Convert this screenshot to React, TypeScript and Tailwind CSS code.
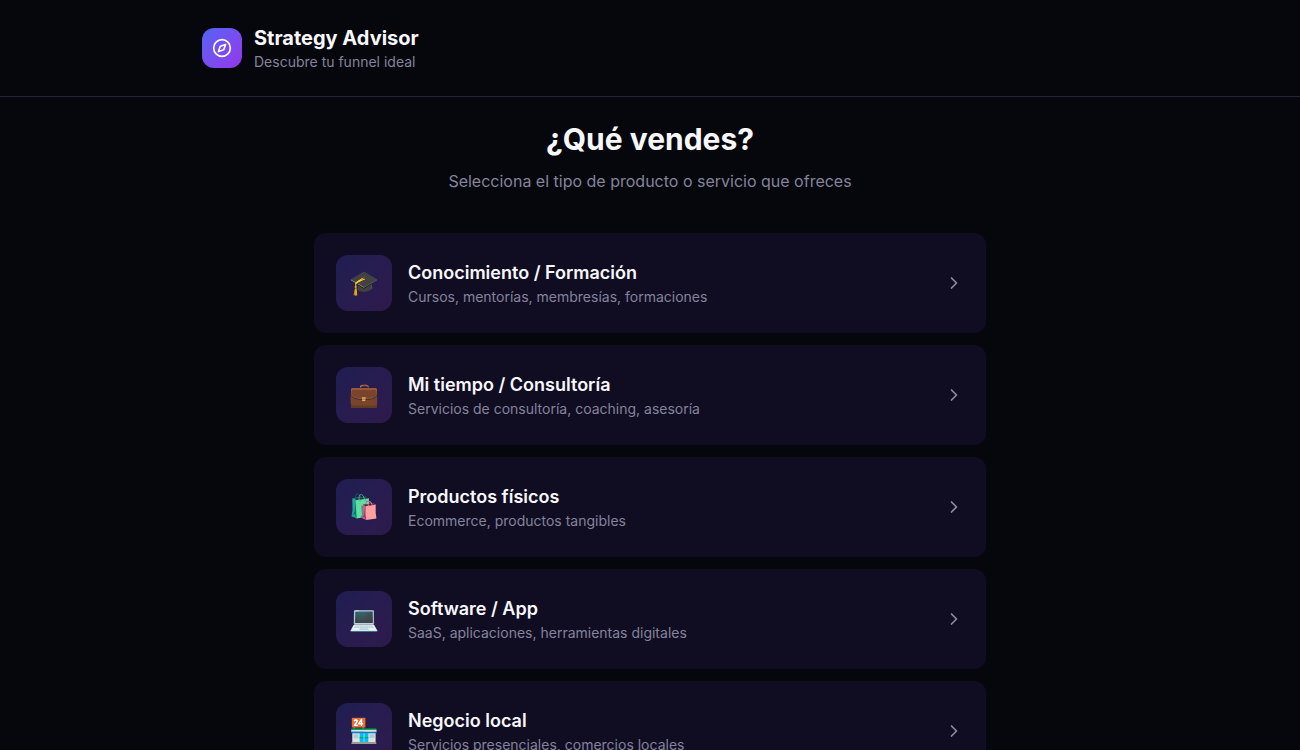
import { ChevronRight, Compass } from "lucide-react";

type Option = { emoji: string; title: string; description: string };

const options: Option[] = [
  { emoji: "🎓", title: "Conocimiento / Formación", description: "Cursos, mentorías, membresías, formaciones" },
  { emoji: "💼", title: "Mi tiempo / Consultoría", description: "Servicios de consultoría, coaching, asesoría" },
  { emoji: "🛍️", title: "Productos físicos", description: "Ecommerce, productos tangibles" },
  { emoji: "💻", title: "Software / App", description: "SaaS, aplicaciones, herramientas digitales" },
  { emoji: "🏪", title: "Negocio local", description: "Servicios presenciales, comercios locales" },
];

function OptionCard({ emoji, title, description }: Option) {
  return (
    <button
      type="button"
      className="flex w-full cursor-pointer items-center gap-4 rounded-xl border-2 border-transparent bg-[#100d22] p-5 text-left hover:border-[#6d4bf0]"
    >
      <span className="flex size-14 shrink-0 items-center justify-center rounded-xl bg-linear-to-br from-[#1f1e52] to-[#2f1a4d] text-2xl">
        {emoji}
      </span>
      <span className="flex min-w-0 flex-1 flex-col">
        <span className="text-lg font-semibold text-[#f8f8fc]">{title}</span>
        <span className="text-sm text-[#84839c]">{description}</span>
      </span>
      <ChevronRight className="size-5 shrink-0 text-[#8f8da6]" aria-hidden="true" />
    </button>
  );
}

export default function App() {
  return (
    <div className="min-h-screen bg-[#06070c] font-['Inter',sans-serif] text-[#f8f8fc] antialiased">
      <header className="border-b border-[#262340] p-6">
        <div className="mx-auto flex max-w-4xl items-center gap-3">
          <div className="flex size-10 items-center justify-center rounded-xl bg-linear-to-br from-[#4f62f5] to-[#9333ea]">
            <Compass className="size-5 text-white" aria-hidden="true" />
          </div>
          <div>
            <h1 className="text-xl font-bold">Strategy Advisor</h1>
            <p className="text-sm text-[#84839c]">Descubre tu funnel ideal</p>
          </div>
        </div>
      </header>
      <main className="mx-auto max-w-4xl p-6">
        <div className="mb-10 text-center">
          <h2 className="mb-3 text-3xl font-bold">¿Qué vendes?</h2>
          <p className="text-[#84839c]">Selecciona el tipo de producto o servicio que ofreces</p>
        </div>
        <div className="mx-auto flex max-w-2xl flex-col gap-3">
          {options.map((option) => (
            <OptionCard key={option.title} {...option} />
          ))}
        </div>
      </main>
    </div>
  );
}
